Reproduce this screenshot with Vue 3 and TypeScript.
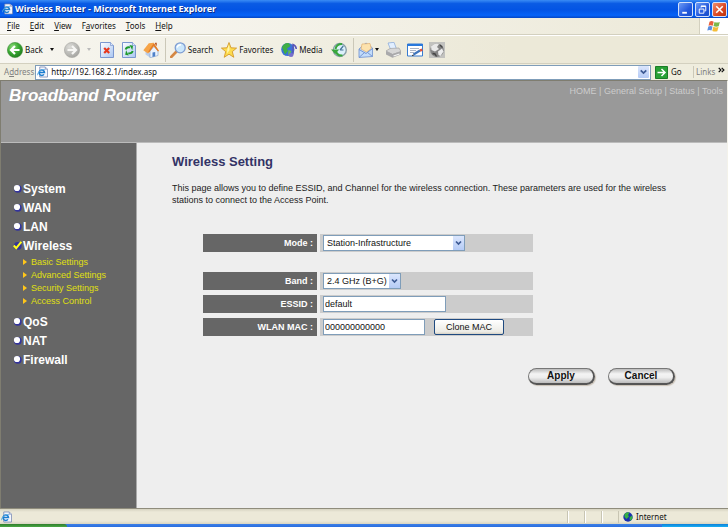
<script setup lang="ts">
import { ref } from 'vue'

interface NavItem {
  label: string
  active?: boolean
  children?: string[]
}

interface MenuEntry {
  before: string
  key: string
  after: string
}

const menus: MenuEntry[] = [
  { before: '', key: 'F', after: 'ile' },
  { before: '', key: 'E', after: 'dit' },
  { before: '', key: 'V', after: 'iew' },
  { before: 'F', key: 'a', after: 'vorites' },
  { before: '', key: 'T', after: 'ools' },
  { before: '', key: 'H', after: 'elp' },
]

const nav: NavItem[] = [
  { label: 'System' },
  { label: 'WAN' },
  { label: 'LAN' },
  {
    label: 'Wireless',
    active: true,
    children: ['Basic Settings', 'Advanced Settings', 'Security Settings', 'Access Control'],
  },
  { label: 'QoS' },
  { label: 'NAT' },
  { label: 'Firewall' },
]

const topLinks: string[] = ['HOME', 'General Setup', 'Status', 'Tools']

const address = ref('http://192.168.2.1/index.asp')
const mode = ref('Station-Infrastructure')
const band = ref('2.4 GHz (B+G)')
const essid = ref('default')
const mac = ref('000000000000')
</script>

<template>
  <div class="window">
    <svg class="defs" aria-hidden="true">
      <defs>
        <radialGradient id="green" cx="35%" cy="30%" r="75%">
          <stop offset="0" stop-color="#8fdc7c" />
          <stop offset="0.5" stop-color="#3dab35" />
          <stop offset="1" stop-color="#1d7d1d" />
        </radialGradient>
        <radialGradient id="grey" cx="35%" cy="30%" r="75%">
          <stop offset="0" stop-color="#dcdcd8" />
          <stop offset="1" stop-color="#a4a4a0" />
        </radialGradient>
        <linearGradient id="sheet" x1="0" y1="0" x2="1" y2="1">
          <stop offset="0" stop-color="#ffffff" />
          <stop offset="1" stop-color="#a9c6f2" />
        </linearGradient>
        <symbol id="iepage" viewBox="0 0 12 12">
          <path d="M3 .5h6l2.500 2.500v8.500H3z" fill="#f4f6fc" stroke="#6d7fae" stroke-width=".8" />
          <path d="M9 .5V3h2.500" fill="#c5d0ea" stroke="#6d7fae" stroke-width=".6" />
          <path d="M2 6.500h6.200A3 3 0 1 0 7.600 8.600" fill="none" stroke="#1c7ed0" stroke-width="1.600" />
          <path d="M.6 9.500C0 7 4 3 8.500 3.300" fill="none" stroke="#54a8e4" stroke-width="1" />
        </symbol>
      </defs>
    </svg>

    <header class="titlebar">
      <svg class="i12"><use href="#iepage" /></svg>
      <span class="title">Wireless Router - Microsoft Internet Explorer</span>
      <div class="caption">
        <button class="cap" type="button" aria-label="Minimize">
          <svg viewBox="0 0 14 14"><path d="M3.500 10.500h5" stroke="#fff" stroke-width="2" /></svg>
        </button>
        <button class="cap" type="button" aria-label="Restore">
          <svg viewBox="0 0 14 14" fill="none" stroke="#fff">
            <path d="M5.500 5V3.500h5v5H9" />
            <path d="M5.500 3.500h5" stroke-width="1.500" />
            <path d="M3.500 6.500h5v4.500h-5z" />
          </svg>
        </button>
        <button class="cap close" type="button" aria-label="Close">
          <svg viewBox="0 0 14 14"><path d="M3.500 3.500l7 7M10.500 3.500l-7 7" stroke="#fff" stroke-width="1.700" /></svg>
        </button>
      </div>
    </header>

    <div class="menubar">
      <nav class="menus">
        <button v-for="m in menus" :key="m.after" type="button" class="plain">{{ m.before }}<u>{{ m.key }}</u>{{ m.after }}</button>
      </nav>
      <div class="flag">
        <svg viewBox="0 0 14 12">
          <path d="M2.500 1.200Q4.500 0 6.700 1.200L5.700 5.200Q3.700 4.200 1.500 5.200z" fill="#e8603c" />
          <path d="M7.500 1.500Q10 2.700 12.800 1.500L11.700 5.700Q9 6.700 6.500 5.500z" fill="#7cb84a" />
          <path d="M1.300 6Q3.500 5 5.500 6.100L4.500 10Q2.500 9 .3 10z" fill="#5b8ee0" />
          <path d="M6.300 6.300Q8.700 7.500 11.500 6.500L10.300 10.700Q7.800 11.600 5.300 10.400z" fill="#f3bd3a" />
        </svg>
      </div>
    </div>

    <div class="toolbar">
      <button type="button" class="tool wide">
        <svg class="i16" viewBox="0 0 16 16">
          <circle cx="8" cy="8" r="7.600" fill="url(#green)" stroke="#3c8a35" stroke-width=".6" />
          <path d="M12.500 8H4.500M8 4L4 8l4 4" fill="none" stroke="#fff" stroke-width="2.200" />
        </svg>
        <span>Back</span>
        <i class="drop"></i>
      </button>
      <button type="button" class="tool" aria-label="Forward" disabled>
        <svg class="i16" viewBox="0 0 16 16">
          <circle cx="8" cy="8" r="7.600" fill="url(#grey)" stroke="#a5a5a0" stroke-width=".6" />
          <path d="M3.500 8h8M8 4l4 4-4 4" fill="none" stroke="#f7f7f4" stroke-width="2.200" />
        </svg>
        <i class="drop dim"></i>
      </button>
      <button type="button" class="tool" aria-label="Stop">
        <svg class="i16" viewBox="0 0 16 16">
          <path d="M1.500.5h10l3 3v12h-13z" fill="url(#sheet)" stroke="#7b97cf" />
          <path d="M11.500.5v3h3" fill="#dce7fa" stroke="#7b97cf" stroke-width=".7" />
          <path d="M5.200 6l5 5M10.200 6l-5 5" stroke="#e8371c" stroke-width="2.200" />
        </svg>
      </button>
      <button type="button" class="tool" aria-label="Refresh">
        <svg class="i16" viewBox="0 0 16 16">
          <path d="M1.500.5h10l3 3v12h-13z" fill="url(#sheet)" stroke="#7b97cf" />
          <path d="M11.500.5v3h3" fill="#dce7fa" stroke="#7b97cf" stroke-width=".7" />
          <path d="M4.600 7.500Q5.500 4.500 9 5.400" fill="none" stroke="#1d9a2b" stroke-width="1.900" />
          <path d="M8.500 3l3.500.7-.7 4.500z" fill="#1d9a2b" />
          <path d="M11.700 9Q10.800 12 7.300 11.200" fill="none" stroke="#1d9a2b" stroke-width="1.900" />
          <path d="M7.800 13.500l-3.600-.8.900-4.400z" fill="#1d9a2b" />
        </svg>
      </button>
      <button type="button" class="tool" aria-label="Home">
        <svg class="i16" viewBox="0 0 16 16">
          <path d="M2.500 7L7 12v3.500L2.500 12.500z" fill="#b9cdec" />
          <path d="M7 9l4-4.500L15 9v4.500l-8 2.300z" fill="#eaf2fd" stroke="#7f9dcc" stroke-width=".6" />
          <path d="M9.500 10.500l2.700-.6v4.300l-2.700.8z" fill="#4d80c8" />
          <path d="M.3 8.300L5.800 1.200l5-.4L6.500 9.800 5 11.500z" fill="#f6a447" />
          <path d="M10.800.8L16 8.800l-1 .7-4.300-5.300L6 10.800l-.8-1z" fill="#e57d25" />
          <path d="M12 .7h1.800v3.500L12 2z" fill="#b85a2a" />
        </svg>
      </button>
      <span class="sep"></span>
      <button type="button" class="tool wide">
        <svg class="i16" viewBox="0 0 16 16">
          <path d="M6.500 9.500L1.200 15" stroke="#d48743" stroke-width="2.600" stroke-linecap="round" />
          <circle cx="10.200" cy="5.800" r="5" fill="#cbe7fb" stroke="#7e9dd2" stroke-width="1.300" />
          <path d="M7 5.500Q8 2.700 11 2.700" fill="none" stroke="#fff" stroke-width="1.400" />
        </svg>
        <span>Search</span>
      </button>
      <button type="button" class="tool wide">
        <svg class="i16" viewBox="0 0 16 16">
          <path d="M8 .5l2 5.300 5.600.3-4.300 3.500 1.500 5.700L8 12.200l-4.800 3.100 1.500-5.700L.4 6.100 6 5.800z" fill="#fddc4e" stroke="#cf9020" stroke-width=".8" />
          <path d="M8 2.500L8.600 8 6 11.500 6.300 7z" fill="#fff6ae" />
        </svg>
        <span>Favorites</span>
      </button>
      <button type="button" class="tool wide">
        <svg class="i16" viewBox="0 0 16 16">
          <circle cx="6.800" cy="7.500" r="6.600" fill="#3a72d8" />
          <path d="M1 5Q4 0 8 1.300L9.500 4 6 6.500 7 9l-3 3.500L2.500 9z" fill="#3fae45" />
          <path d="M7.500 8l3 1-1.500 3.500-2 .5z" fill="#63bd52" />
          <path d="M12 12.500V2.500Q15 3.500 15.300 7" fill="none" stroke="#5a55b8" stroke-width="1.500" />
          <ellipse cx="10" cy="13" rx="2.500" ry="2.100" fill="#7770cc" />
        </svg>
        <span>Media</span>
      </button>
      <button type="button" class="tool" aria-label="History">
        <svg class="i16" viewBox="0 0 16 16">
          <circle cx="8.800" cy="8" r="6.500" fill="#dcf1fb" stroke="#8aa0a9" stroke-width="1.400" />
          <path d="M9 8l3.300-4M9 8h3.500" stroke="#47749a" stroke-width="1.200" />
          <path d="M11.500 13.500Q5.500 14 4.800 8.500M11 2Q5.500 2 4.500 7" fill="none" stroke="#39a63c" stroke-width="2" />
          <path d="M0 7.500h8.200L4.300 12z" fill="#39a63c" />
        </svg>
      </button>
      <span class="sep"></span>
      <button type="button" class="tool mail" aria-label="Mail">
        <svg class="i16" viewBox="0 0 16 16">
          <path d="M1 7L8 1l6.500 5v8.500L1 15.500z" fill="#c3dcfa" stroke="#6d90cf" stroke-width=".8" />
          <path d="M3 7l1-5 8-.5 1.300 5L8.500 10z" fill="#fce2ae" stroke="#e0a762" stroke-width=".6" />
          <path d="M1 7.500l7 4 6.500-5M1 15.500l5.500-5M14.500 14.500l-5-4" fill="none" stroke="#6d90cf" stroke-width=".9" />
        </svg>
        <i class="drop"></i>
      </button>
      <button type="button" class="tool" aria-label="Print">
        <svg class="i16" viewBox="0 0 16 16">
          <path d="M3 1l6-.7L11.500 7 6 8.500z" fill="#e2efff" stroke="#83a5d8" stroke-width=".7" />
          <path d="M1 9l4-2.500L14 6l2 3.500-8.500 3z" fill="#d7d7d7" stroke="#999" stroke-width=".6" />
          <path d="M1 9l6.500 3v3.700L1 12.500zM7.500 12L16 9.300v3.200l-8.500 3.200z" fill="#a9a9ab" />
          <path d="M8.500 14l6-2" stroke="#f4f4f4" stroke-width="1.200" />
        </svg>
      </button>
      <button type="button" class="tool" aria-label="Edit">
        <svg class="i16" viewBox="0 0 16 16">
          <path d="M.5 2h15v12H.5z" fill="#fff" stroke="#377bd0" />
          <path d="M.5 2h15v2H.5z" fill="#2878dc" />
          <path d="M3 6.500h9M3 8.500h6M3 10.500h4" stroke="#a1adc0" stroke-width=".9" />
          <path d="M6.500 12.500L13 8.500" stroke="#3f75bc" stroke-width="2.200" />
          <path d="M13 8.600l2.200-1" stroke="#e0523c" stroke-width="2.600" />
          <path d="M5 13.500l1.800-.4" stroke="#333" stroke-width="1" />
        </svg>
      </button>
      <button type="button" class="tool" aria-label="Discuss">
        <svg class="i16" viewBox="0 0 16 16">
          <path d="M0 0h16v16H0z" fill="#c2c2bf" />
          <circle cx="8" cy="8.300" r="6.800" fill="#858585" />
          <path d="M2 4.500Q6 .5 10 2L8 5l2 2-4 2.500L2.500 8z" fill="#e9e9e9" />
          <path d="M9 9.500l4-3 1.500 3-3 4.500-2-1z" fill="#ededed" />
          <path d="M3.500 11.500l2.500.5L7.500 14.500" fill="none" stroke="#444" stroke-width="1.400" />
          <path d="M11 3l2.500 2.500" stroke="#444" stroke-width="1.300" />
        </svg>
      </button>
    </div>

    <div class="addressbar">
      <label for="addr">A<u>d</u>dress</label>
      <div class="field">
        <svg class="i12"><use href="#iepage" /></svg>
        <input id="addr" v-model="address" type="text" />
        <button type="button" class="chev" aria-label="Show addresses">
          <svg viewBox="0 0 10 10"><path d="M2.500 3.500L5 6l2.500-2.500" fill="none" stroke="#3d5a94" stroke-width="1.600" /></svg>
        </button>
      </div>
      <button type="button" class="go">
        <svg viewBox="0 0 13 13">
          <path d="M.5.5h12v12H.5z" fill="#28a035" stroke="#197d26" />
          <path d="M2.500 6.500h7M6.500 3l3.500 3.500L6.500 10" fill="none" stroke="#fff" stroke-width="1.500" />
        </svg>
        <span>Go</span>
      </button>
      <div class="links">
        <span>Links</span>
        <svg viewBox="0 0 7 6"><path d="M.7.8L2.900 3 .7 5.200M3.700.8L5.900 3 3.700 5.200" fill="none" stroke="#111" stroke-width="1.200" /></svg>
      </div>
    </div>

    <div class="page">
      <div class="banner">
        <h1>Broadband Router</h1>
        <nav class="toplinks">
          <template v-for="(l, i) in topLinks" :key="l"><span v-if="i"> | </span><a href="#">{{ l }}</a></template>
        </nav>
      </div>

      <div class="body">
        <nav class="sidebar">
          <ul class="nav">
            <li v-for="item in nav" :key="item.label">
              <a href="#" class="navlink">
                <svg viewBox="0 0 9 9">
                  <circle cx="4.800" cy="4.800" r="3.900" fill="#33339c" />
                  <circle v-if="!item.active" cx="4" cy="4" r="3.100" fill="#fff" />
                  <path v-else d="M.8 4.500l2.400 2.700L8.300.8" fill="none" stroke="#ffff1a" stroke-width="2" />
                </svg>
                {{ item.label }}
              </a>
              <ul v-if="item.children" class="sub">
                <li v-for="c in item.children" :key="c">
                  <a href="#">
                    <svg viewBox="0 0 4 6"><path d="M0 0l4 3-4 3z" fill="#ffc61a" /></svg>
                    {{ c }}
                  </a>
                </li>
              </ul>
            </li>
          </ul>
        </nav>

        <main class="content">
          <h2>Wireless Setting</h2>
          <p>This page allows you to define ESSID, and Channel for the wireless connection. These parameters are used for the wireless stations to connect to the Access Point.</p>

          <form @submit.prevent>
            <div class="row first">
              <label for="mode">Mode :</label>
              <div class="cell">
                <span class="select mode">
                  <select id="mode" v-model="mode"><option>Station-Infrastructure</option></select>
                  <svg class="arrow" viewBox="0 0 11 13"><path d="M3 5l2.500 2.500L8 5" fill="none" stroke="#3d5a94" stroke-width="1.700" /></svg>
                </span>
              </div>
            </div>
            <div class="row">
              <label for="band">Band :</label>
              <div class="cell">
                <span class="select band">
                  <select id="band" v-model="band"><option>2.4 GHz (B+G)</option></select>
                  <svg class="arrow" viewBox="0 0 11 13"><path d="M3 5l2.500 2.500L8 5" fill="none" stroke="#3d5a94" stroke-width="1.700" /></svg>
                </span>
              </div>
            </div>
            <div class="row">
              <label for="essid">ESSID :</label>
              <div class="cell"><input id="essid" v-model="essid" class="text essid" type="text" /></div>
            </div>
            <div class="row">
              <label for="mac">WLAN MAC :</label>
              <div class="cell">
                <input id="mac" v-model="mac" class="text mac" type="text" />
                <button type="button" class="clone">Clone MAC</button>
              </div>
            </div>
            <div class="actions">
              <button type="submit" class="pill">Apply</button>
              <button type="reset" class="pill">Cancel</button>
            </div>
          </form>
        </main>
      </div>
    </div>

    <footer class="status">
      <svg class="i12"><use href="#iepage" /></svg>
      <div class="panes"><i></i><i></i><i></i></div>
      <div class="zone">
        <svg viewBox="0 0 10 10">
          <circle cx="5" cy="5" r="4.700" fill="#1a2fae" />
          <path d="M1.500 2Q4-.5 6.500.8L5 3 6 4.500 3.500 7 1.500 5zM6.500 5.500l2.500-2 .5 3L7 9z" fill="#36b044" />
        </svg>
        <span>Internet</span>
      </div>
    </footer>
    <div class="taskbar"><i class="start"></i><i class="tray"></i></div>
  </div>
</template>

<style>
body {
  margin: 0;
}
</style>

<style scoped>
.window {
  display: flex;
  flex-direction: column;
  min-height: 100vh;
  background: #ece9d8;
  font-family: "Noto Sans", "Open Sans", sans-serif;
  font-size: 8px;
  line-height: 12px;
  color: #111;
  overflow: hidden;
}
.defs {
  position: absolute;
  width: 0;
  height: 0;
}
svg {
  display: block;
  flex: none;
}
button {
  font: inherit;
  color: inherit;
  border: 0;
  padding: 0;
  background: none;
}
a {
  color: inherit;
  text-decoration: none;
}
.i12 {
  width: 11px;
  height: 12px;
}
.i16 {
  width: 16px;
  height: 16px;
}

.titlebar {
  display: flex;
  align-items: center;
  height: 18px;
  padding: 0 1px 0 2px;
  gap: 2px;
  background: linear-gradient(#3a8cf5, #0a5be4 20%, #0354e4 55%, #0663f8 85%, #0546c4);
}
.title {
  flex: 1;
  color: #fff;
  font-weight: 700;
  font-size: 9px;
  text-shadow: 1px 1px 0 #0f2f86;
  white-space: nowrap;
}
.caption {
  display: flex;
  gap: 2px;
}
.cap {
  width: 15px;
  height: 15px;
  box-sizing: border-box;
  border: 1px solid #d4e2fb;
  border-radius: 2px;
  background: linear-gradient(135deg, #6d9bf5, #2258dd 60%, #1b4fc8);
}
.cap svg {
  width: 13px;
  height: 13px;
}
.cap.close {
  background: linear-gradient(135deg, #f08e6e, #da4622 60%, #b9340f);
}

.menubar {
  display: flex;
  box-sizing: border-box;
  height: 17px;
  border-bottom: 1px solid #d3d0bf;
  background: linear-gradient(90deg, #f9f8f4, #ece9d8);
}
.menus {
  flex: 1;
  display: flex;
  align-items: center;
  gap: 10px;
  padding-left: 7px;
}
.flag {
  display: flex;
  align-items: center;
  justify-content: center;
  width: 28px;
  background: #fff;
  border-left: 1px solid #d3d0bf;
}
.flag svg {
  width: 14px;
  height: 13px;
}

.toolbar {
  display: flex;
  align-items: center;
  box-sizing: border-box;
  height: 29px;
  padding-left: 7px;
  border-top: 1px solid #fff;
  border-bottom: 1px solid #d3d0bf;
  background: linear-gradient(90deg, #f7f6f0, #ece9d8 70%);
}
.tool {
  display: flex;
  align-items: center;
  gap: 2px;
  padding-right: 6px;
}
.tool.wide {
  padding-right: 8px;
}
.drop {
  margin: 0 2px 0 5px;
  border: 2px solid transparent;
  border-top: 3px solid #111;
  border-bottom: 0;
}
.drop.dim {
  border-top-color: #bbb;
}
.mail {
  gap: 0;
}
.mail .drop {
  margin: 0 0 0 1px;
}
.sep {
  width: 1px;
  height: 24px;
  margin-right: 4px;
  background: #cbc8b8;
}

.addressbar {
  display: flex;
  align-items: center;
  height: 16px;
  padding-left: 4px;
  background: #efedde;
  color: #808080;
}
.field {
  flex: 1;
  display: flex;
  align-items: center;
  height: 15px;
  box-sizing: border-box;
  margin-left: 1px;
  padding: 0 1px;
  gap: 3px;
  border: 1px solid #7f9db9;
  background: #fff;
}
.field input {
  flex: 1;
  min-width: 0;
  height: 12px;
  padding: 0;
  border: 0;
  outline: 0;
  font: inherit;
  color: #111;
}
.chev {
  width: 11px;
  height: 12px;
  background: linear-gradient(#dbe6fd, #b5cbf6);
  border-radius: 1px;
}
.chev svg {
  width: 11px;
  height: 12px;
}
.go {
  display: flex;
  align-items: center;
  gap: 3px;
  width: 38px;
  margin-left: 4px;
  color: #111;
}
.go svg {
  width: 13px;
  height: 13px;
}
.links {
  display: flex;
  gap: 3px;
  width: 32px;
  padding-left: 2px;
  border-left: 1px solid #cbc8b8;
}
.links svg {
  width: 7px;
  height: 6px;
  margin-top: 1px;
}

.page {
  flex: 1;
  display: flex;
  flex-direction: column;
  border: solid #7f7d70;
  border-width: 1px 0 0 1px;
  border-right: 1px solid #f3f2ea;
  background: #eee;
  font-family: "Liberation Sans", Arial, sans-serif;
  font-size: 9px;
}
.banner {
  display: flex;
  justify-content: space-between;
  box-sizing: border-box;
  height: 62px;
  padding: 0 4px 0 8px;
  background: #999;
  border-bottom: 1px solid #bbb;
}
h1 {
  margin: 5px 0 0;
  font-size: 17px;
  line-height: 20px;
  font-style: italic;
  color: #fff;
}
.toplinks {
  padding-top: 4px;
  color: #ccc;
  white-space: pre;
}
.body {
  flex: 1;
  display: flex;
}
.sidebar {
  width: 136px;
  flex: none;
  box-sizing: border-box;
  padding: 36px 0 0 12px;
  background: #666;
  border-right: 1px solid #aaa;
}
.nav,
.sub {
  list-style: none;
  margin: 0;
  padding: 0;
}
.navlink {
  display: flex;
  align-items: center;
  gap: 1px;
  height: 19px;
  font-size: 12px;
  font-weight: 700;
  color: #fff;
}
.navlink svg {
  width: 9px;
  height: 9px;
}
.sub {
  padding: 0 0 5px 10px;
}
.sub a {
  display: flex;
  align-items: center;
  gap: 4px;
  height: 13px;
  color: #e0e010;
}
.sub svg {
  width: 4px;
  height: 6px;
}

.content {
  flex: 1;
  padding: 11px 34px 0 35px;
}
h2 {
  margin: 0;
  font-size: 13px;
  line-height: 16px;
  color: #336;
}
p {
  margin: 12px 0 28px;
  line-height: 12px;
  color: #222;
}
form {
  margin-left: 31px;
}
.row {
  display: flex;
  gap: 3px;
  width: 330px;
  height: 18px;
  margin-bottom: 5px;
}
.row.first {
  margin-bottom: 20px;
}
.row label {
  flex: none;
  width: 114px;
  box-sizing: border-box;
  padding-right: 4px;
  background: #666;
  color: #fff;
  font-weight: 700;
  line-height: 18px;
  text-align: right;
}
.cell {
  flex: 1;
  display: flex;
  align-items: center;
  gap: 9px;
  padding-left: 3px;
  background: #ccc;
}
.select {
  position: relative;
  display: block;
}
.mode {
  width: 142px;
}
.band {
  width: 78px;
}
select,
.text {
  display: block;
  box-sizing: border-box;
  height: 16px;
  margin: 0;
  border: 1px solid #7f9db9;
  border-radius: 0;
  background: #fff;
  color: #111;
  font: inherit;
  outline: 0;
}
select {
  width: 100%;
  appearance: none;
  padding: 0 0 0 3px;
}
.text {
  padding: 0 1px;
}
.essid {
  width: 123px;
}
.mac {
  width: 102px;
}
.arrow {
  position: absolute;
  top: 1px;
  right: 1px;
  width: 11px;
  height: 14px;
  background: linear-gradient(#dbe6fd, #b5cbf6);
  pointer-events: none;
}
.clone {
  width: 70px;
  height: 16px;
  border: 1px solid #1f4a80;
  border-radius: 2px;
  background: linear-gradient(#fff, #ecebe5 85%, #d6d0c4);
  font-size: 9px;
}
.actions {
  display: flex;
  justify-content: flex-end;
  gap: 13px;
  padding: 27px 18px 0 0;
}
.pill {
  width: 67px;
  height: 17px;
  border: 1px solid #777;
  border-right: 2px solid #555;
  border-bottom: 2px solid #555;
  border-radius: 9px;
  background: linear-gradient(#bbb, #f4f4f4 35%, #eee 60%, #bbb);
  box-shadow: 1px 1px 1px #c9c0b4;
  font-size: 10px;
  font-weight: 700;
}

.status {
  display: flex;
  align-items: center;
  box-sizing: border-box;
  height: 16px;
  border-top: 1px solid #8f8c7c;
  padding-left: 1px;
  background: linear-gradient(#d5d2c0, #ece9d8 20%, #ece9d8 80%, #d8d5c2);
}
.panes {
  flex: 1;
  display: flex;
  justify-content: flex-end;
}
.panes i {
  width: 16px;
  height: 12px;
  border-left: 1px solid #c8c5b3;
  box-shadow: inset 1px 0 #fff;
}
.zone {
  display: flex;
  align-items: center;
  gap: 3px;
  width: 105px;
  height: 12px;
  padding-left: 4px;
  border-left: 1px solid #c8c5b3;
}
.zone svg {
  width: 10px;
  height: 10px;
}
.taskbar {
  display: flex;
  justify-content: space-between;
  height: 3px;
  background: linear-gradient(#3c7fe6, #2a6fe0);
}
.start {
  width: 67px;
  border-radius: 0 3px 0 0;
  background: linear-gradient(#2f7d2c, #4aa845);
}
.tray {
  width: 66px;
  background: linear-gradient(#0d7fd8, #19b0f3);
}
</style>
